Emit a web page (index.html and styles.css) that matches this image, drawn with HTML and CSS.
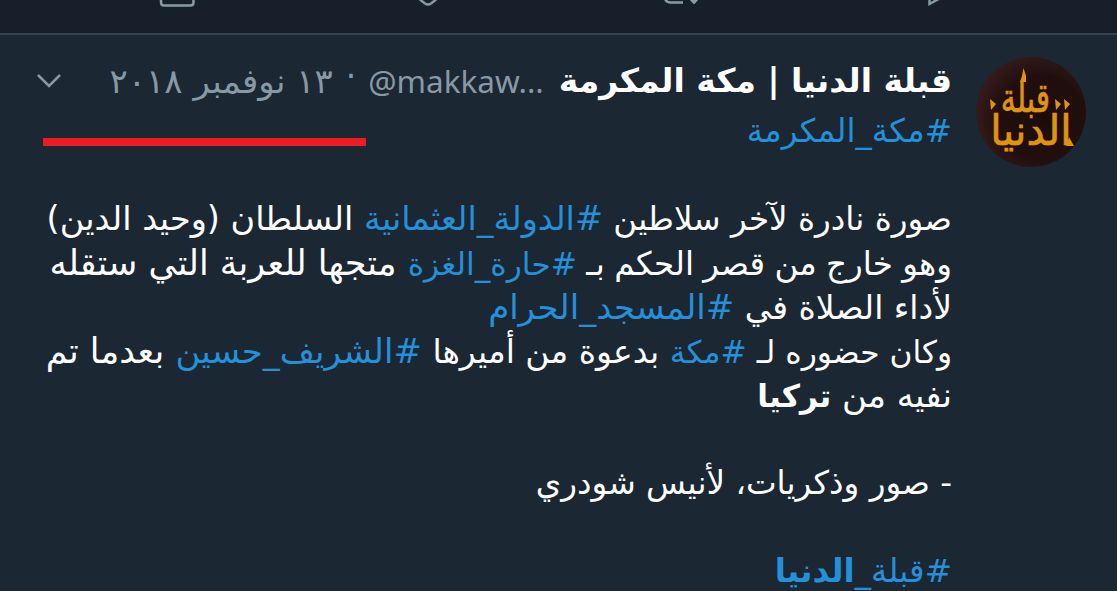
FILE: index.html
```
<!DOCTYPE html>
<html lang="ar" dir="rtl">
<head>
  <meta charset="UTF-8">
  <meta name="viewport" content="width=device-width, initial-scale=1.0">
  <title>قبلة الدنيا | مكة المكرمة</title>
  <link rel="stylesheet" href="styles.css">
</head>
<body>

  <div class="prev_tweet">
    <svg class="actions" width="1117" height="33" viewBox="0 0 1117 33">
      <path d="M161 -12V2.500Q161 5.500 164 5.500H190.500Q193.500 5.500 193.500 2.500V-12"/>
      <path d="M414 -6Q419 -1 425 3.500Q428 5.500 431 3.500Q437 -1 442 -6"/>
      <path d="M665 -12V-3Q665 2.500 671 2.500H683"/>
      <path class="fill" d="M688 -2H700L695 3.500Q694 4.500 693 3.500Z"/>
      <path d="M929.500 -8V4L944 -4"/>
    </svg>
  </div>

  <div class="tweet">
    <svg class="avatar" width="112" height="112" viewBox="0 0 112 112">
      <defs>
        <radialGradient id="leather" cx="60%" cy="55%" r="60%">
          <stop offset="0" stop-color="#1b0c0b"/>
          <stop offset="0.650" stop-color="#210f0e"/>
          <stop offset="1" stop-color="#341b1a"/>
        </radialGradient>
      </defs>
      <circle cx="56" cy="56" r="55" fill="url(#leather)"/>
      <text transform="translate(50.500 56) scale(1.250 1.700)">قبلة</text>
      <text transform="translate(56 89) scale(1.700 1.750)">الدنيا</text>
      <path class="tips" d="M45 26L47 20L48.500 12L51 20V26ZM15 43L21 48L16 54ZM80 43L86 48L81 54ZM89 43L95 48L90 54ZM94 81L99 90H91Z"/>
    </svg>

    <div class="content">
      <div class="tweet_header">
        <span class="name">قبلة الدنيا | مكة المكرمة</span>
        <span class="user" dir="ltr">@makkaw...</span>
        <span class="dot">·</span>
        <span class="date">١٣ نوفمبر ٢٠١٨</span>
        <svg class="arrow" width="26" height="16" viewBox="0 0 26 16">
          <path d="M2 2L13 13L24 2"/>
        </svg>
      </div>

      <div class="tweet_text">
        <p><a class="s">#مكة_المكرمة</a></p>
        <p></p>
        <p><span class="s">صورة نادرة لآخر سلاطين </span><a class="m">#الدولة_العثمانية</a><span class="m"> السلطان (وحيد الدين)</span></p>
        <p><span class="s close">وهو خارج من قصر الحكم بـ </span><a class="xs">#حارة_الغزة</a><span class="xl"> متجها للعربة التي ستقله</span></p>
        <p>لأداء الصلاة في <a class="l">#المسجد_الحرام</a></p>
        <p><span class="xs">وكان حضوره لـ </span><a class="xs">#مكة</a> بدعوة من أميرها <a class="l">#الشريف_حسين</a><span class="xl"> بعدما تم</span></p>
        <p><span class="l">نفيه من </span><b class="xs">تركيا</b></p>
        <p></p>
        <p><span class="s">- صور وذكريات، لأنيس شودري</span></p>
        <p></p>
        <p><a class="s">#قبلة_<b>الدنيا</b></a></p>
      </div>
    </div>

    <div class="red_line"></div>
  </div>

</body>
</html>
```

FILE: styles.css
```
* {
  box-sizing: border-box;
  padding: 0;
  margin: 0;
}

body {
  height: 591px;
  overflow: hidden;
  background-color: #1b2733;
  font-family: "DejaVu Sans", "Noto Sans", sans-serif;
  color: white;
}

.prev_tweet {
  height: 35px;
  background-color: #17202a;
  border-bottom: 2px solid #38444f;
}
.actions {
  display: block;
}
.actions path {
  fill: none;
  stroke: #8899a6;
  stroke-width: 2.5;
}
.actions .fill {
  fill: #8899a6;
  stroke: none;
}

.tweet {
  position: relative;
  display: flex;
  padding: 21px 30px 0 36px;
}
.avatar {
  flex: none;
}
.avatar text {
  fill: #e0930f;
  stroke: #e0930f;
  stroke-width: 0.4;
  font-family: "DejaVu Sans", sans-serif;
  font-size: 24px;
  text-anchor: middle;
}
.avatar .tips {
  fill: #e0930f;
}

.content {
  flex: 1;
  min-width: 0;
  margin-right: 23px;
}
.tweet_header {
  display: flex;
  align-items: center;
  height: 53px;
  padding-bottom: 4px;
  white-space: nowrap;
  font-size: 33px;
  color: #8899a6;
}
.name {
  color: white;
  font-weight: bold;
}
.user {
  margin-right: 15px;
  font-family: "Noto Sans", sans-serif;
  font-size: 31.5px;
}
.dot {
  margin-right: 12px;
  margin-top: -9px;
}
.date {
  margin-right: 13px;
  font-size: 34px;
}
.arrow {
  margin-right: auto;
}
.arrow path {
  fill: none;
  stroke: #8899a6;
  stroke-width: 2.5;
}

.tweet_text p {
  height: 44px;
  line-height: 44px;
  font-size: 33px;
  white-space: nowrap;
}
.tweet_text a {
  color: #2490d9;
}
.tweet_text .xs {
  font-size: 31.3px;
}
.tweet_text .s {
  font-size: 32.6px;
}
.tweet_text .m {
  font-size: 33.5px;
}
.tweet_text .l {
  font-size: 34px;
}
.tweet_text .xl {
  font-size: 35px;
}
.tweet_text .close {
  word-spacing: -1px;
}

.red_line {
  position: absolute;
  left: 43px;
  top: 103px;
  width: 323px;
  height: 8px;
  background-color: #ed1c24;
}
```
